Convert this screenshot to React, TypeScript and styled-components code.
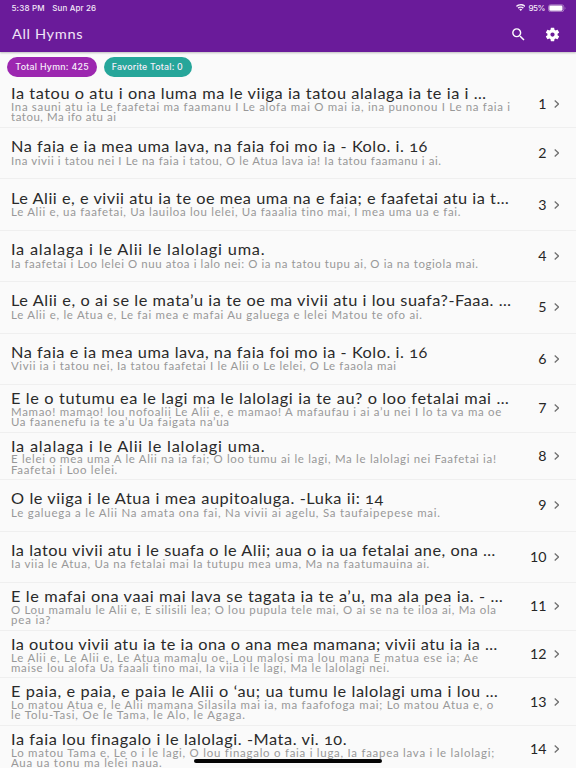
import React, { useLayoutEffect, useRef, useState } from "react";
import styled, { createGlobalStyle } from "styled-components";

const GlobalStyle = createGlobalStyle`
  * { box-sizing: border-box; }
  html, body { margin: 0; padding: 0; background: #fafafa; }
  body { overflow: hidden; font-family: "Lato", "Open Sans", sans-serif; }
`;

const Screen = styled.div`
  position: relative;
  display: flex;
  flex-direction: column;
  width: 576px;
  height: 768px;
  overflow: hidden;
  background: #fafafa;
`;

const Header = styled.header`
  flex: none;
  height: 51.5px;
  background: #6a1b9a;
  color: #fff;
  box-shadow: 0 1px 2px rgba(0, 0, 0, 0.25);
`;

const StatusBar = styled.div`
  display: flex;
  align-items: center;
  height: 16px;
  padding: 0 10px 0 11.5px;
  font: 500 8px/16px "Inter", sans-serif;
  color: #f3e9f8;
`;

const StatusDate = styled.div`
  margin-left: 7.5px;
`;

const StatusRight = styled.div`
  display: flex;
  align-items: center;
  gap: 3px;
  margin-left: auto;
`;

const TitleBar = styled.div`
  display: flex;
  align-items: center;
  height: 36px;
  padding: 0 15.5px 0 11.5px;
  color: #f1e4f7;
`;

const ScreenTitle = styled.h1`
  margin: 0;
  font-size: 13.8px;
  font-weight: 400;
  line-height: 36px;
`;

const Actions = styled.div`
  display: flex;
  align-items: center;
  gap: 16.5px;
  margin-left: auto;
  color: #fff;
`;

const Icon = styled.svg<{ $w: number; $h: number }>`
  display: block;
  flex: none;
  width: ${(p) => p.$w}px;
  height: ${(p) => p.$h}px;
`;

const Chips = styled.div`
  display: flex;
  flex: none;
  gap: 6.5px;
  height: 28.8px;
  padding: 5.2px 7px 0;
`;

const Chip = styled.div<{ $color: string; $width: number }>`
  display: flex;
  align-items: center;
  width: ${(p) => p.$width}px;
  height: 20.6px;
  padding-left: 8.3px;
  border-radius: 11px;
  background: ${(p) => p.$color};
  color: #f8eefa;
  font-family: "Inter", sans-serif;
  font-size: 8.8px;
  font-weight: 500;
  line-height: 20px;
`;

const List = styled.div`
  display: flex;
  flex-direction: column;
`;

const Row = styled.div<{ $tall: boolean }>`
  display: flex;
  flex: none;
  align-items: center;
  justify-content: space-between;
  height: ${(p) => (p.$tall ? 51.45 : 47.6)}px;
  padding: 0 16.8px 0 11.3px;
  border-bottom: 1px solid #efefef;
`;

const Copy = styled.div<{ $tall: boolean }>`
  align-self: flex-start;
  padding-top: ${(p) => (p.$tall ? 9.2 : 4)}px;
`;

const HymnTitle = styled.div<{ $tall: boolean }>`
  height: ${(p) => (p.$tall ? 18.6 : 17.8)}px;
  font-size: 15.4px;
  line-height: 18px;
  color: #2a2a2a;
  font-feature-settings: "onum";
`;

const Lyric = styled.div`
  height: 10.3px;
  font-size: 10.8px;
  line-height: 10.3px;
  color: #989898;
`;

const Trailing = styled.div`
  display: flex;
  align-items: center;
  gap: 7.3px;
  color: #262626;
  font-size: 14.2px;
  line-height: 20px;
`;

const HomeIndicator = styled.div`
  position: absolute;
  left: 194px;
  top: 759px;
  width: 188px;
  height: 4px;
  border-radius: 2px;
  background: #050505;
`;

const Line = styled.span<{ $stretch: number }>`
  display: block;
  width: max-content;
  white-space: pre;
  transform: scaleX(${(p) => p.$stretch});
  transform-origin: 0 50%;
`;

/** Tracks a single line of text out to the given measure. */
function Tracked({ text, width, stretch = 1 }: { text: string; width: number; stretch?: number }) {
  const ref = useRef<HTMLSpanElement>(null);
  const [tracking, setTracking] = useState(0);
  useLayoutEffect(() => {
    if (!ref.current) return;
    ref.current.style.letterSpacing = "0px";
    const natural = ref.current.getBoundingClientRect().width;
    const next = (width - natural) / stretch / (text.length - 1);
    ref.current.style.letterSpacing = `${next}px`;
    setTracking(next);
  }, [text, width, stretch]);
  return (
    <Line ref={ref} $stretch={stretch} style={{ letterSpacing: `${tracking}px` }}>
      {text}
    </Line>
  );
}

type Measured = [text: string, width: number];
interface Hymn {
  title: Measured;
  lyrics: Measured[];
}

const hymns: Hymn[] = [
  { title: ["Ia tatou o atu i ona luma ma le viiga ia tatou alalaga ia te ia i …", 475], lyrics: [["Ina sauni atu ia Le faafetai ma faamanu I Le alofa mai O mai ia, ina punonou I Le na faia i", 499], ["tatou, Ma ifo atu ai", 105]] },
  { title: ["Na faia e ia mea uma lava, na faia foi mo ia - Kolo. i. 16", 416.3], lyrics: [["Ina vivii i tatou nei I Le na faia i tatou, O le Atua lava ia! Ia tatou faamanu i ai.", 430]] },
  { title: ["Le Alii e, e vivii atu ia te oe mea uma na e faia; e faafetai atu ia t…", 497.7], lyrics: [["Le Alii e, ua faafetai, Ua lauiloa lou lelei, Ua faaalia tino mai, I mea uma ua e fai.", 449.7]] },
  { title: ["Ia alalaga i le Alii le lalolagi uma.", 253.6], lyrics: [["Ia faafetai i Loo lelei O nuu atoa i lalo nei: O ia na tatou tupu ai, O ia na togiola mai.", 467]] },
  { title: ["Le Alii e, o ai se le mata’u ia te oe ma vivii atu i lou suafa?-Faaa. …", 500], lyrics: [["Le Alii e, le Atua e, Le fai mea e mafai Au galuega e lelei Matou te ofo ai.", 411]] },
  { title: ["Na faia e ia mea uma lava, na faia foi mo ia - Kolo. i. 16", 416.3], lyrics: [["Vivii ia i tatou nei, Ia tatou faafetai I le Alii o Le lelei, O Le faaola mai", 385]] },
  { title: ["E le o tutumu ea le lagi ma le lalolagi ia te au? o loo fetalai mai …", 497.7], lyrics: [["Mamao! mamao! lou nofoalii Le Alii e, e mamao! A mafaufau i ai a’u nei I lo ta va ma oe", 490.3], ["Ua faanenefu ia te a’u Ua faigata na’ua", 218]] },
  { title: ["Ia alalaga i le Alii le lalolagi uma.", 253.6], lyrics: [["E lelei o mea uma A le Alii na ia fai; O loo tumu ai le lagi, Ma le lalolagi nei Faafetai ia!", 485], ["Faafetai i Loo lelei.", 106.3]] },
  { title: ["O le viiga i le Atua i mea aupitoaluga. -Luka ii: 14", 372.3], lyrics: [["Le galuega a le Alii Na amata ona fai, Na vivii ai agelu, Sa taufaipepese mai.", 429]] },
  { title: ["Ia latou vivii atu i le suafa o le Alii; aua o ia ua fetalai ane, ona …", 484.3], lyrics: [["Ia viia le Atua, Ua na fetalai mai Ia tutupu mea uma, Ma na faatumauina ai.", 418.3]] },
  { title: ["E le mafai ona vaai mai lava se tagata ia te a’u, ma ala pea ia. - …", 491.7], lyrics: [["O Lou mamalu le Alii e, E silisili lea; O lou pupula tele mai, O ai se na te iloa ai, Ma ola", 485], ["pea ia?", 39.5]] },
  { title: ["Ia outou vivii atu ia te ia ona o ana mea mamana; vivii atu ia ia …", 486.3], lyrics: [["Le Alii e, Le Alii e, Le Atua mamalu oe, Lou malosi ma lou mana E matua ese ia; Ae", 467], ["maise lou alofa Ua faaali tino mai, Ia viia i le lagi, Ma le lalolagi nei.", 378.3]] },
  { title: ["E paia, e paia, e paia le Alii o ‘au; ua tumu le lalolagi uma i lou …", 486.7], lyrics: [["Lo matou Atua e, le Alii mamana Silasila mai ia, ma faafofoga mai; Lo matou Atua e, o", 482.3], ["le Tolu-Tasi, Oe le Tama, le Alo, le Agaga.", 234]] },
  { title: ["Ia faia lou finagalo i le lalolagi. -Mata. vi. 10.", 335.3], lyrics: [["Lo matou Tama e, Le o i le lagi, O lou finagalo o faia i luga, Ia faapea lava i le lalolagi;", 483], ["Aua ua tonu ma lelei naua.", 150.7]] },
];

export default function App() {
  return (
    <>
      <GlobalStyle />
      <Screen>
        <Header>
          <StatusBar>
            <Tracked text="5:38 PM" width={33} />
            <StatusDate>
              <Tracked text="Sun Apr 26" width={44} />
            </StatusDate>
            <StatusRight>
              <Icon $w={9.5} $h={7.5} viewBox="0 0 18 14" fill="currentColor">
                <path d="M9 0C5.500 0 2.400 1.300 0 3.500L1.900 5.500C3.800 3.800 6.300 2.800 9 2.800s5.200 1 7.100 2.700L18 3.500C15.600 1.300 12.500 0 9 0zM9 4.500c-2.300 0-4.300.8-5.900 2.200L5 8.700C6 7.800 7.500 7.200 9 7.200s3 .6 4 1.500l1.900-2C13.300 5.300 11.300 4.500 9 4.500zM9 9c-1.100 0-2.100.4-2.800 1.100L9 13l2.800-2.900C11.100 9.400 10.100 9 9 9z" />
              </Icon>
              <Tracked text="95%" width={17} />
              <Icon $w={18} $h={8} viewBox="0 0 18 8">
                <rect x=".5" y=".8" width="15.300" height="6.800" rx="2" fill="none" stroke="#b68fcb" strokeWidth=".8" />
                <rect x="1.300" y="1.600" width="13.200" height="5.200" rx="1.200" fill="#fff" />
                <path d="M16.800 3v2.400c.8-.3.8-2.100 0-2.400z" fill="#b68fcb" />
              </Icon>
            </StatusRight>
          </StatusBar>
          <TitleBar>
            <ScreenTitle>
              <Tracked text="All Hymns" width={70.5} stretch={1.06} />
            </ScreenTitle>
            <Actions>
              <Icon $w={17} $h={17} viewBox="0 0 24 24" fill="currentColor">
                <path d="M15.500 14h-.79l-.28-.27A6.471 6.471 0 0 0 16 9.500 6.500 6.500 0 1 0 9.500 16c1.610 0 3.090-.59 4.230-1.570l.27.28v.79l5 4.990L20.490 19l-4.990-5zm-6 0C7.010 14 5 11.990 5 9.500S7.010 5 9.500 5 14 7.010 14 9.500 11.990 14 9.500 14z" />
              </Icon>
              <Icon $w={17} $h={17} viewBox="0 0 24 24" fill="currentColor">
                <path d="M19.140 12.940c.04-.3.060-.61.060-.94 0-.32-.02-.64-.07-.94l2.030-1.580c.18-.14.230-.41.120-.61l-1.920-3.320c-.12-.22-.37-.29-.59-.22l-2.390.96c-.5-.38-1.030-.7-1.620-.94l-.36-2.540c-.04-.24-.24-.41-.48-.41h-3.840c-.24 0-.43.17-.47.410l-.36 2.540c-.59.24-1.130.57-1.620.94l-2.390-.96c-.22-.08-.47 0-.59.22L2.740 8.870c-.12.21-.08.47.12.61l2.030 1.580c-.05.3-.09.63-.09.94s.02.64.070.94l-2.030 1.580c-.18.14-.23.41-.12.61l1.920 3.320c.12.220.37.290.59.220l2.390-.96c.5.38 1.030.7 1.620.94l.36 2.540c.050.24.24.41.48.41h3.840c.24 0 .44-.17.47-.41l.36-2.540c.59-.24 1.130-.56 1.620-.94l2.390.96c.22.080.47 0 .59-.22l1.920-3.320c.12-.22.070-.47-.12-.61l-2.010-1.580zM12 15a3 3 0 1 1 0-6 3 3 0 0 1 0 6z" />
              </Icon>
            </Actions>
          </TitleBar>
        </Header>
        <Chips>
          <Chip $color="#9c27b0" $width={90}>
            <Tracked text="Total Hymn: 425" width={73.3} />
          </Chip>
          <Chip $color="#26a69a" $width={88}>
            <Tracked text="Favorite Total: 0" width={71} />
          </Chip>
        </Chips>
        <List>
          {hymns.map((hymn, index) => {
            const tall = hymn.lyrics.length === 1;
            return (
              <Row key={index} $tall={tall}>
                <Copy $tall={tall}>
                  <HymnTitle $tall={tall}>
                    <Tracked text={hymn.title[0]} width={hymn.title[1]} stretch={1.06} />
                  </HymnTitle>
                  {hymn.lyrics.map(([text, width]) => (
                    <Lyric key={text}>
                      <Tracked text={text} width={width} stretch={1.06} />
                    </Lyric>
                  ))}
                </Copy>
                <Trailing>
                  <span>{index + 1}</span>
                  <Icon $w={5.5} $h={8} viewBox="0 0 5.5 8" fill="none" stroke="#707070" strokeWidth="1.300">
                    <path d="M.7.6 4.500 4 .7 7.400" />
                  </Icon>
                </Trailing>
              </Row>
            );
          })}
        </List>
        <HomeIndicator />
      </Screen>
    </>
  );
}
